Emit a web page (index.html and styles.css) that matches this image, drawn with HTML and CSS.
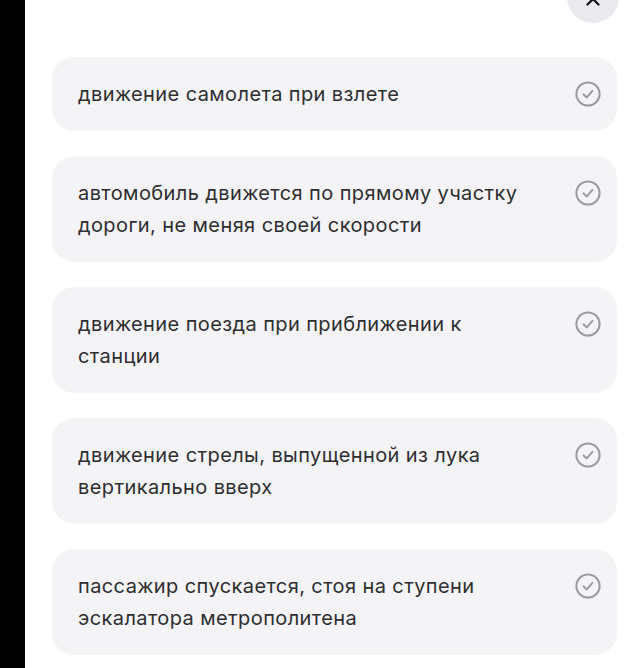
FILE: index.html
```html
<!DOCTYPE html>
<html lang="ru">
<head>
<meta charset="utf-8">
<link rel="stylesheet" href="styles.css">
</head>
<body>
<div class="sheet">
  <button class="close" aria-label="Закрыть">
    <svg viewBox="0 0 24 24" width="22" height="22"><path d="M6 6 L18 18 M18 6 L6 18" stroke="#111" stroke-width="2.4" stroke-linecap="round" fill="none"/></svg>
  </button>
  <ul class="options">
    <li class="option"><span class="label">движение самолета при взлете</span><span class="check"><svg viewBox="0 0 26 26" width="26" height="26"><circle cx="13" cy="13" r="11.6" stroke="#9b9ba0" stroke-width="2" fill="none"/><path d="M8.6 13.4 L11.8 16.4 L17.4 9.8" stroke="#9b9ba0" stroke-width="2" stroke-linecap="round" stroke-linejoin="round" fill="none"/></svg></span></li>
    <li class="option"><span class="label">автомобиль движется по прямому участку дороги, не меняя своей скорости</span><span class="check"><svg viewBox="0 0 26 26" width="26" height="26"><circle cx="13" cy="13" r="11.6" stroke="#9b9ba0" stroke-width="2" fill="none"/><path d="M8.6 13.4 L11.8 16.4 L17.4 9.8" stroke="#9b9ba0" stroke-width="2" stroke-linecap="round" stroke-linejoin="round" fill="none"/></svg></span></li>
    <li class="option"><span class="label">движение поезда при приближении к станции</span><span class="check"><svg viewBox="0 0 26 26" width="26" height="26"><circle cx="13" cy="13" r="11.6" stroke="#9b9ba0" stroke-width="2" fill="none"/><path d="M8.6 13.4 L11.8 16.4 L17.4 9.8" stroke="#9b9ba0" stroke-width="2" stroke-linecap="round" stroke-linejoin="round" fill="none"/></svg></span></li>
    <li class="option"><span class="label">движение стрелы, выпущенной из лука вертикально вверх</span><span class="check"><svg viewBox="0 0 26 26" width="26" height="26"><circle cx="13" cy="13" r="11.6" stroke="#9b9ba0" stroke-width="2" fill="none"/><path d="M8.6 13.4 L11.8 16.4 L17.4 9.8" stroke="#9b9ba0" stroke-width="2" stroke-linecap="round" stroke-linejoin="round" fill="none"/></svg></span></li>
    <li class="option"><span class="label">пассажир спускается, стоя на ступени эскалатора метрополитена</span><span class="check"><svg viewBox="0 0 26 26" width="26" height="26"><circle cx="13" cy="13" r="11.6" stroke="#9b9ba0" stroke-width="2" fill="none"/><path d="M8.6 13.4 L11.8 16.4 L17.4 9.8" stroke="#9b9ba0" stroke-width="2" stroke-linecap="round" stroke-linejoin="round" fill="none"/></svg></span></li>
  </ul>
</div>
</body>
</html>
```

FILE: styles.css
```css
html, body {
  margin: 0;
  padding: 0;
  height: 100%;
  background: #000;
}
body {
  font-family: Inter, "Noto Sans", "Liberation Sans", sans-serif;
  overflow: hidden;
}
.sheet {
  position: relative;
  margin-left: 25px;
  min-height: 100%;
  background: #fff;
  padding: 57px 9px 0 27px;
  box-sizing: border-box;
}
.close {
  position: absolute;
  top: -29px;
  right: 7px;
  width: 52px;
  height: 52px;
  border: none;
  border-radius: 50%;
  background: #e9e9ee;
  display: flex;
  align-items: center;
  justify-content: center;
  padding: 0;
}
.close svg {
  margin-top: 4px;
}
.options {
  list-style: none;
  margin: 0;
  padding: 0;
  display: flex;
  flex-direction: column;
  gap: 25px;
}
.option {
  display: flex;
  align-items: flex-start;
  background: #f4f4f7;
  border-radius: 22px;
  padding: 21px 16px 21px 26px;
}
.label {
  flex: 1;
  max-width: 456px;
  margin-right: auto;
  font-size: 20px;
  line-height: 32px;
  color: #2e2e31;
  letter-spacing: 0.4px;
}
.check {
  display: flex;
  width: 26px;
  height: 26px;
  margin-top: 3px;
  margin-left: 20px;
}
```
